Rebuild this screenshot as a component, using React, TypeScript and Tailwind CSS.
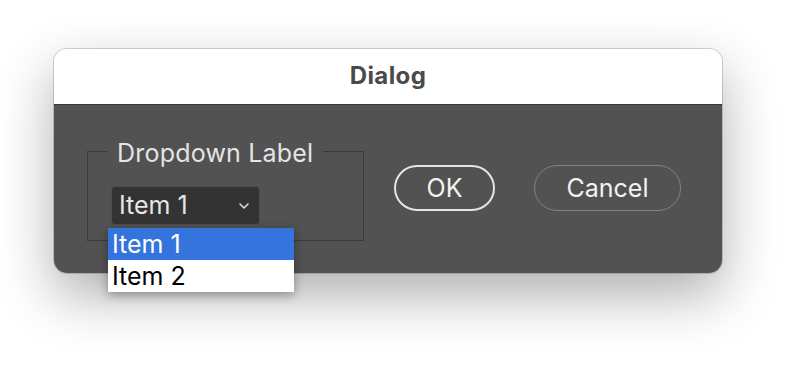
export default function App() {
  const font = { fontFamily: "Inter, 'Noto Sans', sans-serif" };
  return (
    <div className="h-[372px] w-[800px] overflow-hidden bg-white pl-[54px] pt-[49px]" style={font}>
      <div className="flex h-[224px] w-[668px] flex-col overflow-visible rounded-[13px] shadow-[0_0_0_1px_rgba(0,0,0,0.16),0_22px_55px_rgba(0,0,0,0.32)]">
        {/* title bar */}
        <div className="flex h-[56px] items-center justify-center rounded-t-[13px] border-b border-[#383838] bg-white pb-[1px]">
          <span className="text-[24px] font-bold leading-none tracking-[0.4px] text-[#4a4a4a]">Dialog</span>
        </div>

        {/* body */}
        <div className="flex flex-1 items-start gap-[30px] rounded-b-[13px] bg-[#525252] pl-[33px] pt-[32px]">
          <fieldset className="relative m-0 h-[104px] w-[277px] border border-[#3a3a3a] p-0 pt-[21px]">
            <legend className="ml-[19px] px-[10px] text-[25px] leading-[28px] tracking-[0.2px] text-[#e4e4e4]">
              <span className="relative top-[2px]">Dropdown Label</span>
            </legend>
            <div className="relative ml-[23px]">
              <div className="flex h-[39px] w-[149px] items-center justify-between rounded-[4px] border border-[#4c4c4c] bg-[#333333] pl-[7px] pr-[10px]">
                <span className="text-[25px] leading-none text-[#e6e6e6]">Item 1</span>
                <svg width="10" height="6" viewBox="0 0 10 6" fill="none">
                  <path d="M1 1l4 4 4-4" stroke="#dcdcdc" strokeWidth="1.6" strokeLinecap="round" strokeLinejoin="round" />
                </svg>
              </div>
              <ul className="absolute left-[-3px] top-[42px] z-10 w-[186px] bg-white shadow-[0_3px_10px_rgba(0,0,0,0.35)]">
                <li className="flex h-[32px] items-center bg-[#3574dd] pl-[4px] text-[25px] leading-none text-white">Item 1</li>
                <li className="flex h-[32px] items-center pl-[4px] text-[25px] leading-none text-black">Item 2</li>
              </ul>
            </div>
          </fieldset>

          <div className="mt-[28px] flex gap-[39px]">
            <button className="flex h-[46px] w-[101px] items-center justify-center rounded-full border-2 border-[#e4e4e4] text-[25px] leading-none text-[#f2f2f2]">
              OK
            </button>
            <button className="flex h-[46px] w-[147px] items-center justify-center rounded-full border-[1.5px] border-[#828282] text-[25px] leading-none text-[#f2f2f2]">
              Cancel
            </button>
          </div>
        </div>
      </div>
    </div>
  );
}
